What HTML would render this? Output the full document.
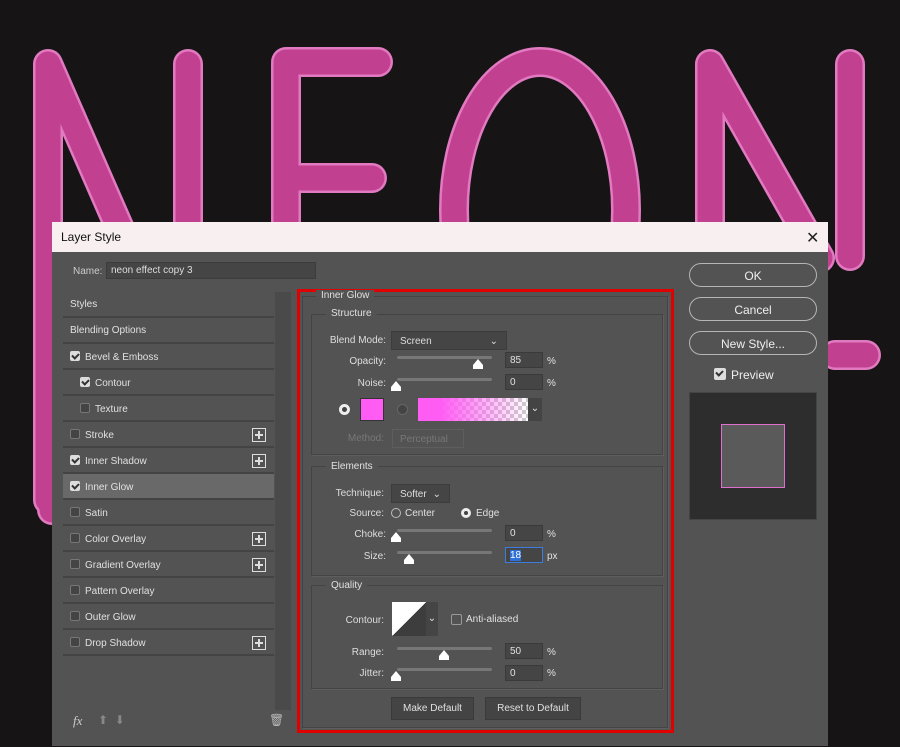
<!DOCTYPE html>
<html><head><style>
*{box-sizing:border-box;margin:0;padding:0}
body{width:900px;height:747px;overflow:hidden;background:#161414;font-family:"Liberation Sans",sans-serif;font-size:10px;color:#e0e0e0;position:relative}
.a{position:absolute}
.dlg{left:52px;top:222px;width:776px;height:524px;background:#535353}
.title{left:52px;top:222px;width:776px;height:30px;background:#f8f0f0;color:#111;font-size:12px;padding:8px 0 0 9px}
.inp{background:#454545;border:1px solid #3c3c3c;color:#ddd;padding:2px 4px}
.row{left:63px;width:211px;height:26px;border-bottom:2px solid #434343;background:#535353;padding:7px 0 0 7px}
.cb{display:inline-block;width:10px;height:10px;border:1px solid #777;background:#444;border-radius:2px;vertical-align:-1px;margin-right:5px}
.cb.on{background:#ddd;border-color:#ddd;position:relative}
.cb.on:after{content:"";position:absolute;left:2px;top:0px;width:3px;height:5px;border:solid #333;border-width:0 2px 2px 0;transform:rotate(45deg)}
.plus{right:8px;top:6px;width:14px;height:14px;border:1px solid #ddd}
.plus:before{content:"";position:absolute;left:2px;top:5px;width:8px;height:2px;background:#ddd}
.plus:after{content:"";position:absolute;left:5px;top:2px;width:2px;height:8px;background:#ddd}
.btn{left:689px;width:128px;height:24px;border:1px solid #b5b5b5;border-radius:12px;text-align:center;font-size:12px;padding-top:5px;color:#eee}
.grp{border:1px solid #444;box-shadow:1px 1px 0 #5e5e5e}
.lbl{text-align:right;color:#ddd}
.sl{height:3px;background:#777;border-radius:2px;width:95px;left:397px}
.th{width:0;height:0;border-left:5px solid transparent;border-right:5px solid transparent;border-bottom:6px solid #fff}
.th:after{content:"";position:absolute;left:-5px;top:6px;width:10px;height:4px;background:#fff}
.num{left:505px;width:38px;height:16px;background:#454545;border:1px solid #3a3a3a;padding:2px 4px}
.pb{background:#444;border:1px solid #3a3a3a;text-align:center;padding-top:5px}
.leg{background:#535353;padding:0 5px}
</style></head><body>
<svg class="a" style="left:0;top:0" width="900" height="747">
<g fill="none" stroke="#e27ac2" stroke-width="30" stroke-linejoin="round" stroke-linecap="round">
<path d="M48 64V500M48 64L186 380M188 64V380"/>
<path d="M286 64V380M286 62H378M286 178H372"/>
<ellipse cx="540" cy="210" rx="86" ry="148"/>
<path d="M710 64V380M710 64L820 258M850 64V256"/>
<path d="M52 360V510M835 355H866"/>
</g>
<g fill="none" stroke="#c1408f" stroke-width="25" stroke-linejoin="round" stroke-linecap="round">
<path d="M48 64V500M48 64L186 380M188 64V380"/>
<path d="M286 64V380M286 62H378M286 178H372"/>
<ellipse cx="540" cy="210" rx="86" ry="148"/>
<path d="M710 64V380M710 64L820 258M850 64V256"/>
<path d="M52 360V510M835 355H866"/>
</g>
</svg>
<div class="a dlg"></div>
<div class="a title">Layer Style</div>
<div class="a" style="left:806px;top:228px;font-size:16px;color:#222">✕</div>
<div class="a" style="left:73px;top:266px;color:#ccc">Name:</div>
<div class="a inp" style="left:106px;top:262px;width:210px;height:17px">neon effect copy 3</div>
<div class="a" style="left:275px;top:292px;width:16px;height:418px;background:#4a4a4a"></div>
<div class="a row" style="top:292px">Styles</div>
<div class="a row" style="top:318px">Blending Options</div>
<div class="a row" style="top:344px"><span class="cb on"></span>Bevel &amp; Emboss</div>
<div class="a row" style="top:370px;padding-left:17px"><span class="cb on"></span>Contour</div>
<div class="a row" style="top:396px;padding-left:17px"><span class="cb"></span>Texture</div>
<div class="a row" style="top:422px"><span class="cb"></span>Stroke<div class="a plus"></div></div>
<div class="a row" style="top:448px"><span class="cb on"></span>Inner Shadow<div class="a plus"></div></div>
<div class="a row" style="top:474px;background:#696969"><span class="cb on"></span>Inner Glow</div>
<div class="a row" style="top:500px"><span class="cb"></span>Satin</div>
<div class="a row" style="top:526px"><span class="cb"></span>Color Overlay<div class="a plus"></div></div>
<div class="a row" style="top:552px"><span class="cb"></span>Gradient Overlay<div class="a plus"></div></div>
<div class="a row" style="top:578px"><span class="cb"></span>Pattern Overlay</div>
<div class="a row" style="top:604px"><span class="cb"></span>Outer Glow</div>
<div class="a row" style="top:630px"><span class="cb"></span>Drop Shadow<div class="a plus"></div></div>
<div class="a" style="left:73px;top:713px;font-size:13px;font-style:italic;color:#ccc;font-family:'Liberation Serif',serif">fx</div>
<div class="a" style="left:98px;top:713px;color:#888;font-size:12px">⬆ &nbsp;⬇</div>
<div class="a" style="left:269px;top:713px;color:#bbb;font-size:12px">🗑</div>

<div class="a" style="left:297px;top:289px;width:377px;height:444px;border:3px solid #e00000"></div>
<div class="a grp" style="left:302px;top:296px;width:366px;height:432px"></div>
<div class="a leg" style="left:316px;top:290px">Inner Glow</div>
<div class="a grp" style="left:311px;top:314px;width:352px;height:141px"></div>
<div class="a leg" style="left:326px;top:308px">Structure</div>
<div class="a lbl" style="left:310px;top:335px;width:76px">Blend Mode:</div>
<div class="a inp" style="left:391px;top:331px;width:116px;height:19px;padding:4px 8px">Screen<span style="float:right">⌄</span></div>
<div class="a lbl" style="left:310px;top:356px;width:76px">Opacity:</div>
<div class="a sl" style="top:356px"></div><div class="a th" style="left:473px;top:359px"></div>
<div class="a num" style="top:352px">85</div><div class="a" style="left:547px;top:356px">%</div>
<div class="a lbl" style="left:310px;top:378px;width:76px">Noise:</div>
<div class="a sl" style="top:378px"></div><div class="a th" style="left:391px;top:381px"></div>
<div class="a num" style="top:374px">0</div><div class="a" style="left:547px;top:378px">%</div>
<div class="a" style="left:339px;top:404px;width:11px;height:11px;border-radius:50%;background:#eee;border:3px solid #eee"><div style="width:5px;height:5px;background:#444;border-radius:50%"></div></div>
<div class="a" style="left:360px;top:398px;width:24px;height:23px;background:#ff5cf4;border:1px solid #333"></div>
<div class="a" style="left:397px;top:404px;width:11px;height:11px;border-radius:50%;background:#444;border:1px solid #666"></div>
<div class="a" style="left:418px;top:398px;width:110px;height:23px;background:linear-gradient(90deg,#ff5cf4 20%,rgba(255,92,244,0)),repeating-conic-gradient(#ccc 0 25%,#fff 0 50%) 0 0/8px 8px"></div>
<div class="a" style="left:528px;top:398px;width:14px;height:23px;background:#444;text-align:center;padding-top:5px">⌄</div>
<div class="a lbl" style="left:310px;top:433px;width:74px;color:#777">Method:</div>
<div class="a" style="left:392px;top:429px;width:72px;height:19px;border:1px solid #5e5e5e;color:#777;padding:4px 7px;white-space:nowrap;overflow:hidden">Perceptual</div>

<div class="a grp" style="left:311px;top:466px;width:352px;height:110px"></div>
<div class="a leg" style="left:326px;top:461px">Elements</div>
<div class="a lbl" style="left:310px;top:488px;width:74px">Technique:</div>
<div class="a inp" style="left:391px;top:484px;width:59px;height:19px;padding:4px 8px">Softer<span style="float:right">⌄</span></div>
<div class="a lbl" style="left:310px;top:508px;width:74px">Source:</div>
<div class="a" style="left:391px;top:508px;width:10px;height:10px;border-radius:50%;border:1px solid #bbb"></div>
<div class="a" style="left:405px;top:508px">Center</div>
<div class="a" style="left:461px;top:508px;width:10px;height:10px;border-radius:50%;background:#444;border:3px solid #eee"></div>
<div class="a" style="left:476px;top:508px">Edge</div>
<div class="a lbl" style="left:310px;top:529px;width:76px">Choke:</div>
<div class="a sl" style="top:529px"></div><div class="a th" style="left:391px;top:532px"></div>
<div class="a num" style="top:525px">0</div><div class="a" style="left:547px;top:529px">%</div>
<div class="a lbl" style="left:310px;top:551px;width:76px">Size:</div>
<div class="a sl" style="top:551px"></div><div class="a th" style="left:404px;top:554px"></div>
<div class="a num" style="top:547px;border:1px solid #3c7be0"><span style="background:#2e6fd8;color:#fff">18</span></div><div class="a" style="left:547px;top:551px">px</div>

<div class="a grp" style="left:311px;top:585px;width:352px;height:104px"></div>
<div class="a leg" style="left:326px;top:580px">Quality</div>
<div class="a lbl" style="left:310px;top:615px;width:74px">Contour:</div>
<div class="a" style="left:392px;top:602px;width:34px;height:34px;background:linear-gradient(135deg,#fff 50%,#3d3d3d 50%)"></div>
<div class="a" style="left:426px;top:602px;width:12px;height:34px;background:#454545;text-align:center;padding-top:11px">⌄</div>
<div class="a" style="left:451px;top:614px;width:11px;height:11px;border:1px solid #999;border-radius:2px"></div>
<div class="a" style="left:466px;top:614px">Anti-aliased</div>
<div class="a lbl" style="left:310px;top:647px;width:74px">Range:</div>
<div class="a sl" style="top:647px"></div><div class="a th" style="left:439px;top:650px"></div>
<div class="a num" style="top:643px">50</div><div class="a" style="left:547px;top:647px">%</div>
<div class="a lbl" style="left:310px;top:668px;width:74px">Jitter:</div>
<div class="a sl" style="top:668px"></div><div class="a th" style="left:391px;top:671px"></div>
<div class="a num" style="top:665px">0</div><div class="a" style="left:547px;top:668px">%</div>
<div class="a pb" style="left:391px;top:697px;width:83px;height:23px">Make Default</div>
<div class="a pb" style="left:485px;top:697px;width:96px;height:23px">Reset to Default</div>

<div class="a btn" style="top:263px">OK</div>
<div class="a btn" style="top:297px">Cancel</div>
<div class="a btn" style="top:331px">New Style...</div>
<div class="a" style="left:714px;top:368px;font-size:12px;color:#eee"><span class="cb on" style="width:12px;height:12px"></span>Preview</div>
<div class="a" style="left:689px;top:392px;width:128px;height:128px;background:#2d2d2d;border:1px solid #444"></div>
<div class="a" style="left:721px;top:424px;width:64px;height:64px;background:#5a5a5a;border:1px solid #e070d0"></div>
</body></html>
